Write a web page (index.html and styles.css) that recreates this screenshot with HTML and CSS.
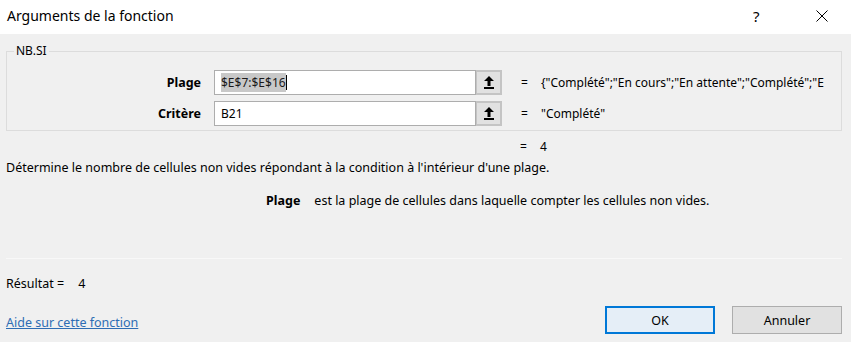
FILE: index.html
```html
<!DOCTYPE html>
<html lang="fr">
<head>
<meta charset="utf-8">
<link rel="stylesheet" href="styles.css">
</head>
<body>
<div class="dialog">
  <div class="titlebar">
    <span class="title">Arguments de la fonction</span>
    <span class="help">?</span>
    <span class="close"><svg width="12" height="12" viewBox="0 0 12 12"><path d="M0.5 0.5 L11.5 11.5 M11.5 0.5 L0.5 11.5" stroke="#000" stroke-width="1" fill="none"/></svg></span>
  </div>
  <div class="content">
    <fieldset class="group">
      <legend>NB.SI</legend>
      <div class="row">
        <span class="label">Plage</span>
        <div class="input"><span class="sel">$E$7:$E$16</span><span class="caret"></span></div>
        <div class="refbtn"><svg width="10" height="13" viewBox="0 0 10 13"><path d="M5 0 L10 5 L6.5 5 L6.5 10 L3.5 10 L3.5 5 L0 5 Z" fill="#000"/><rect x="0" y="11" width="10" height="2" fill="#000"/></svg></div>
        <span class="eq">=</span>
        <span class="val">{"Complété";"En cours";"En attente";"Complété";"E</span>
      </div>
      <div class="row">
        <span class="label">Critère</span>
        <div class="input">B21</div>
        <div class="refbtn"><svg width="10" height="13" viewBox="0 0 10 13"><path d="M5 0 L10 5 L6.5 5 L6.5 10 L3.5 10 L3.5 5 L0 5 Z" fill="#000"/><rect x="0" y="11" width="10" height="2" fill="#000"/></svg></div>
        <span class="eq">=</span>
        <span class="val">"Complété"</span>
      </div>
    </fieldset>
    <div class="total"><span class="eq">=</span><span class="val">4</span></div>
    <p class="desc">Détermine le nombre de cellules non vides répondant à la condition à l'intérieur d'une plage.</p>
    <p class="argdesc"><b>Plage</b><span>est la plage de cellules dans laquelle compter les cellules non vides.</span></p>
    <div class="sep"></div>
    <p class="result">Résultat =<span class="rv">4</span></p>
    <div class="footer">
      <a class="link" href="#">Aide sur cette fonction</a>
      <div class="buttons">
        <button class="btn ok">OK</button>
        <button class="btn">Annuler</button>
      </div>
    </div>
  </div>
</div>
</body>
</html>
```

FILE: styles.css
```css
* { box-sizing: border-box; }
html, body { margin: 0; padding: 0; }
body {
  width: 851px;
  height: 342px;
  overflow: hidden;
  background: #f0f0f0;
  font-family: "Noto Sans", "Open Sans", sans-serif;
  font-size: 12px;
  color: #000;
}
.titlebar {
  height: 34px;
  background: #fff;
  display: flex;
  align-items: center;
  padding-left: 7px;
}
.title {
  font-size: 14px;
  flex: 1;
  margin-top: -3px;
}
.help {
  font-size: 15px;
  width: 14px;
  margin-right: 49px;
  margin-top: -3px;
}
.close {
  width: 12px;
  height: 12px;
  margin-right: 23px;
  margin-top: -3px;
  display: flex;
}
.content {
  padding: 0 9px 0 6px;
}
.group {
  margin: 10px 0 0 0;
  padding: 12px 0 5px 0;
  border: 1px solid #dcdcdc;
  height: 87px;
  min-width: 0;
}
.group legend {
  padding: 0 2px;
  margin-left: 7px;
  line-height: 14px;
}
.row {
  display: flex;
  align-items: center;
  height: 25px;
  margin-bottom: 6px;
}
.label {
  width: 194px;
  text-align: right;
  font-weight: bold;
  font-size: 12.5px;
  margin-right: 13px;
}
.input {
  width: 262px;
  height: 25px;
  background: #fff;
  border: 1px solid #adadad;
  display: flex;
  align-items: center;
  padding-left: 6px;
  font-size: 12px;
}
.sel {
  background: #c8c8c8;
  color: #1a1a1a;
  padding: 1px 0;
}
.caret {
  width: 1px;
  height: 15px;
  background: #000;
}
.refbtn {
  width: 26px;
  height: 25px;
  background: #e1e1e1;
  border: 2px solid #c4c4c4;
  border-left-width: 1px;
  display: flex;
  align-items: center;
  justify-content: center;
}
.eq {
  margin-left: 19px;
  width: 20px;
}
.val { white-space: nowrap; }
.total {
  display: flex;
  height: 14px;
  margin-top: 8px;
  padding-left: 495px;
  align-items: center;
}
.total .eq { margin-left: 19px; }
.desc {
  margin: 7px 0 0 0;
  line-height: 16px;
  font-size: 12.5px;
}
.argdesc {
  margin: 17px 0 0 0;
  padding-left: 260px;
  line-height: 16px;
  font-size: 12.5px;
}
.argdesc b { font-size: 12.5px; margin-right: 14px; }
.sep {
  margin-top: 49px;
  height: 1px;
  background: #dcdcdc;
  border-bottom: 1px solid #f8f8f8;
}
.result {
  margin: 17px 0 0 0;
  line-height: 16px;
  font-size: 12.5px;
}
.rv { margin-left: 14px; }
.footer {
  display: flex;
  align-items: center;
  justify-content: space-between;
  margin-top: 14px;
}
.link {
  color: #2e6db4;
  text-decoration: underline;
  margin-top: 4px;
  font-size: 12.5px;
}
.buttons {
  display: flex;
  gap: 17px;
}
.btn {
  width: 110px;
  height: 28px;
  background: #e1e1e1;
  border: 1px solid #adadad;
  font-family: "Noto Sans", "Open Sans", sans-serif;
  font-size: 12.5px;
  color: #000;
  padding: 0;
}
.btn.ok {
  border: 2px solid #0078d7;
  background: #e5eef7;
}
```
